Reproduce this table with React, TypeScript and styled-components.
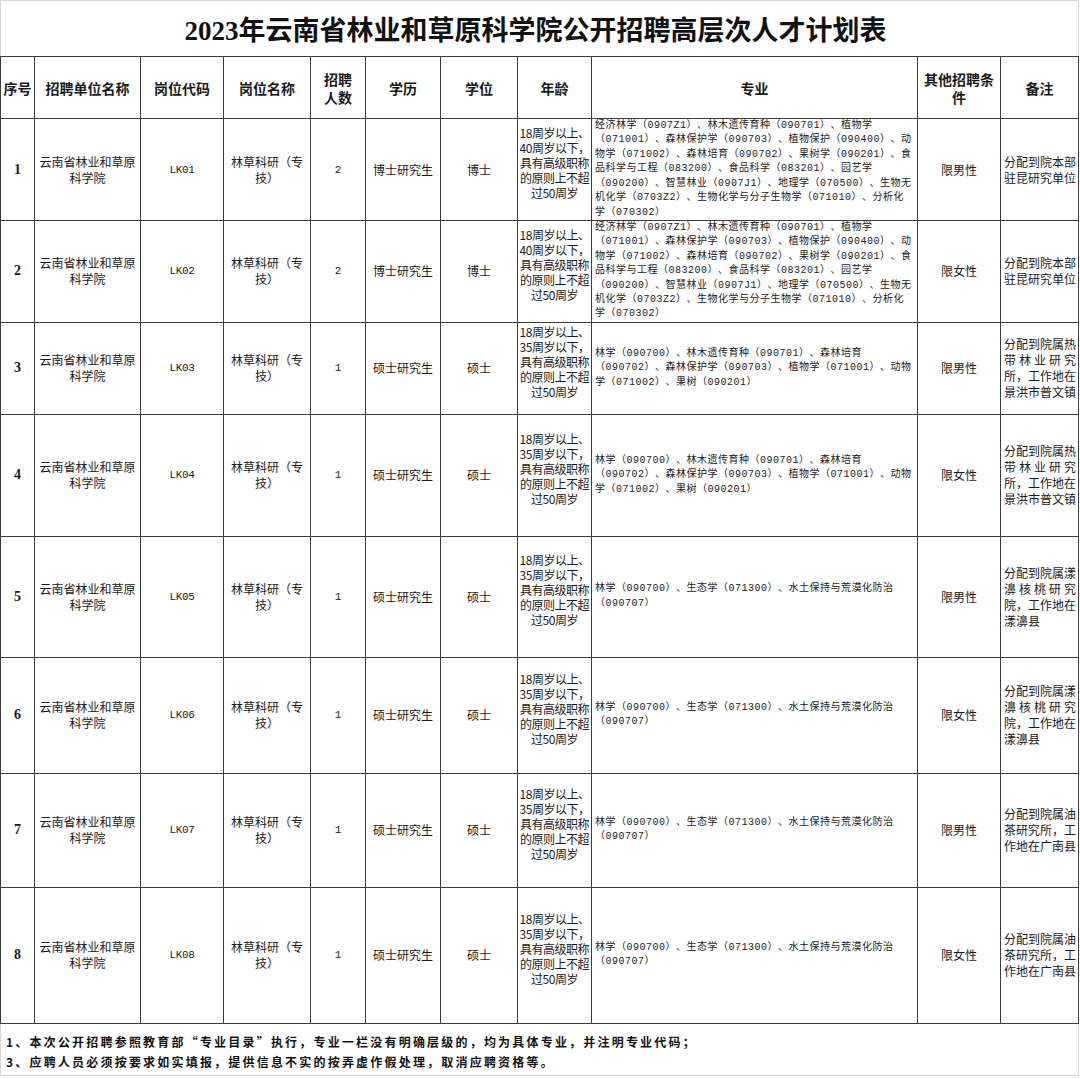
import React from "react";
import styled, { createGlobalStyle } from "styled-components";

const GlobalStyle = createGlobalStyle`
  html, body {
    margin: 0;
    padding: 0;
    background: #ffffff;
  }
  body {
    font-family: "Noto Sans CJK SC", "Noto Sans", sans-serif;
    color: #111111;
    text-spacing-trim: space-all;
  }
`;

const cols = [34, 106, 83, 87, 55, 75, 77, 74, 326, 83, 78];

type Row = {
  no: number;
  code: string;
  count: string;
  edu: string;
  degree: string;
  ageMax: string;
  majors: string[];
  cond: string;
  remark: { text: string; spread?: boolean }[];
  height: number;
};

const phdMajors = [
  "经济林学（0907Z1）、林木遗传育种（090701）、植物学",
  "（071001）、森林保护学（090703）、植物保护（090400）、动",
  "物学（071002）、森林培育（090702）、果树学（090201）、食",
  "品科学与工程（083200）、食品科学（083201）、园艺学",
  "（090200）、智慧林业（0907J1）、地理学（070500）、生物无",
  "机化学（0703Z2）、生物化学与分子生物学（071010）、分析化",
  "学（070302）",
];

const forestMajors = [
  "林学（090700）、林木遗传育种（090701）、森林培育",
  "（090702）、森林保护学（090703）、植物学（071001）、动物",
  "学（071002）、果树（090201）",
];

const ecoMajors = [
  "林学（090700）、生态学（071300）、水土保持与荒漠化防治",
  "（090707）",
];

const hqRemark = [{ text: "分配到院本部" }, { text: "驻昆研究单位" }];
const tropicRemark = [
  { text: "分配到院属热" },
  { text: "带林业研究", spread: true },
  { text: "所，工作地在" },
  { text: "景洪市普文镇" },
];
const walnutRemark = [
  { text: "分配到院属漾" },
  { text: "濞核桃研究", spread: true },
  { text: "院，工作地在" },
  { text: "漾濞县" },
];
const teaRemark = [
  { text: "分配到院属油" },
  { text: "茶研究所，工" },
  { text: "作地在广南县" },
];

const rows: Row[] = [
  { no: 1, code: "LK01", count: "2", edu: "博士研究生", degree: "博士", ageMax: "40", majors: phdMajors, cond: "限男性", remark: hqRemark, height: 102 },
  { no: 2, code: "LK02", count: "2", edu: "博士研究生", degree: "博士", ageMax: "40", majors: phdMajors, cond: "限女性", remark: hqRemark, height: 101 },
  { no: 3, code: "LK03", count: "1", edu: "硕士研究生", degree: "硕士", ageMax: "35", majors: forestMajors, cond: "限男性", remark: tropicRemark, height: 92 },
  { no: 4, code: "LK04", count: "1", edu: "硕士研究生", degree: "硕士", ageMax: "35", majors: forestMajors, cond: "限女性", remark: tropicRemark, height: 122 },
  { no: 5, code: "LK05", count: "1", edu: "硕士研究生", degree: "硕士", ageMax: "35", majors: ecoMajors, cond: "限男性", remark: walnutRemark, height: 121 },
  { no: 6, code: "LK06", count: "1", edu: "硕士研究生", degree: "硕士", ageMax: "35", majors: ecoMajors, cond: "限女性", remark: walnutRemark, height: 116 },
  { no: 7, code: "LK07", count: "1", edu: "硕士研究生", degree: "硕士", ageMax: "35", majors: ecoMajors, cond: "限男性", remark: teaRemark, height: 114 },
  { no: 8, code: "LK08", count: "1", edu: "硕士研究生", degree: "硕士", ageMax: "35", majors: ecoMajors, cond: "限女性", remark: teaRemark, height: 136 },
];

const Sheet = styled.div`
  width: 1079px;
  display: flex;
  flex-direction: column;
`;

const TitleBar = styled.div`
  height: 55px;
  display: flex;
  align-items: center;
  justify-content: center;
  border: 1px solid #d6d6d6;
  border-bottom: none;
`;

const TitleText = styled.h1`
  margin: 0 0 0 -8px;
  font-family: "Liberation Serif", "Noto Sans CJK SC", serif;
  font-size: 27px;
  font-weight: 700;
  color: #111;
`;

const Grid = styled.table`
  width: 1079px;
  border-collapse: collapse;
  table-layout: fixed;
`;

const GridRow = styled.tr<{ $h: number }>`
  height: ${(p) => p.$h}px;
`;

const HeadCell = styled.th`
  border: 1px solid #3d3d3d;
  padding: 0;
  font-size: 14px;
  font-weight: 700;
  line-height: 18px;
  text-align: center;
  vertical-align: middle;
  color: #1a1a1a;
`;

const Cell = styled.td<{ $align?: "left" | "center" }>`
  border: 1px solid #3d3d3d;
  padding: 0;
  font-size: 12px;
  line-height: 16px;
  text-align: ${(p) => p.$align ?? "center"};
  vertical-align: middle;
  color: #1a1a1a;
  overflow: hidden;
`;

const SeqCell = styled(Cell)`
  font-family: "Liberation Serif", serif;
  font-weight: 700;
  font-size: 14px;
`;

const MonoCell = styled(Cell)`
  font-family: "Liberation Mono", monospace;
  font-size: 11px;
  letter-spacing: -0.3px;
`;

const AgeCell = styled(Cell)`
  font-size: 12px;
  line-height: 15px;
  letter-spacing: -0.5px;
  padding-bottom: 14px;
`;

const MajorCell = styled(Cell)`
  font-family: "Liberation Mono", "Noto Sans CJK SC", monospace;
  font-size: 10px;
  letter-spacing: 0.5px;
  line-height: 14.4px;
  padding-left: 3px;
`;

const RemarkCell = styled(Cell)`
  font-size: 12px;
  line-height: 16px;
  padding: 0 2px 0 3px;
`;

const Line = styled.span<{ $spread?: boolean }>`
  display: block;
  white-space: nowrap;
  text-align: ${(p) => (p.$spread ? "justify" : "inherit")};
  text-align-last: ${(p) => (p.$spread ? "justify" : "auto")};
`;

const SpreadLine = styled(Line)`
  white-space: normal;
`;

const Notes = styled.div`
  height: 52px;
  padding: 8px 0 0 5px;
  border: 1px solid #d6d6d6;
  border-top: none;
  box-sizing: border-box;
`;

const NoteLine = styled.p`
  margin: 0;
  font-size: 12px;
  font-weight: 700;
  letter-spacing: 2.2px;
  line-height: 20px;
  color: #111;
  white-space: nowrap;
`;

function Lines({ items }: { items: string[] }) {
  return (
    <>
      {items.map((t, i) => (
        <Line key={i}>{t}</Line>
      ))}
    </>
  );
}

export default function App() {
  return (
    <>
      <GlobalStyle />
      <Sheet>
        <TitleBar>
          <TitleText>2023年云南省林业和草原科学院公开招聘高层次人才计划表</TitleText>
        </TitleBar>
        <Grid>
          <colgroup>
            {cols.map((w, i) => (
              <col key={i} style={{ width: w }} />
            ))}
          </colgroup>
          <thead>
            <GridRow $h={62}>
              <HeadCell>序号</HeadCell>
              <HeadCell>招聘单位名称</HeadCell>
              <HeadCell>岗位代码</HeadCell>
              <HeadCell>岗位名称</HeadCell>
              <HeadCell>
                <Lines items={["招聘", "人数"]} />
              </HeadCell>
              <HeadCell>学历</HeadCell>
              <HeadCell>学位</HeadCell>
              <HeadCell>年龄</HeadCell>
              <HeadCell>专业</HeadCell>
              <HeadCell>
                <Lines items={["其他招聘条", "件"]} />
              </HeadCell>
              <HeadCell>备注</HeadCell>
            </GridRow>
          </thead>
          <tbody>
            {rows.map((r) => (
              <GridRow key={r.no} $h={r.height}>
                <SeqCell>{r.no}</SeqCell>
                <Cell>
                  <Lines items={["云南省林业和草原", "科学院"]} />
                </Cell>
                <MonoCell>{r.code}</MonoCell>
                <Cell>
                  <Lines items={["林草科研（专", "技）"]} />
                </Cell>
                <MonoCell>{r.count}</MonoCell>
                <Cell>{r.edu}</Cell>
                <Cell>{r.degree}</Cell>
                <AgeCell>
                  <Lines
                    items={[
                      "18周岁以上、",
                      `${r.ageMax}周岁以下，`,
                      "具有高级职称",
                      "的原则上不超",
                      "过50周岁",
                    ]}
                  />
                </AgeCell>
                <MajorCell $align="left">
                  <Lines items={r.majors} />
                </MajorCell>
                <Cell>{r.cond}</Cell>
                <RemarkCell $align="left">
                  {r.remark.map((l, i) =>
                    l.spread ? (
                      <SpreadLine key={i} $spread>
                        {l.text.split("").join(" ")}
                      </SpreadLine>
                    ) : (
                      <Line key={i}>{l.text}</Line>
                    )
                  )}
                </RemarkCell>
              </GridRow>
            ))}
          </tbody>
        </Grid>
        <Notes>
          <NoteLine>
            1、本次公开招聘参照教育部“专业目录”执行，专业一栏没有明确层级的，均为具体专业，并注明专业代码；
          </NoteLine>
          <NoteLine>3、应聘人员必须按要求如实填报，提供信息不实的按弄虚作假处理，取消应聘资格等。</NoteLine>
        </Notes>
      </Sheet>
    </>
  );
}
